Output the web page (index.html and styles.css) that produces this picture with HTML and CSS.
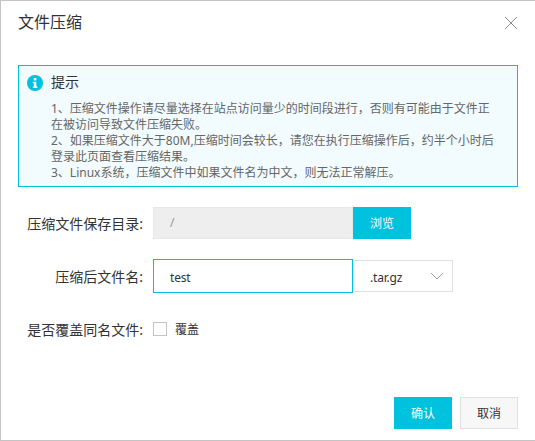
FILE: index.html
```html
<!DOCTYPE html>
<html lang="zh-CN">
<head>
<meta charset="utf-8">
<title>文件压缩</title>
<link rel="stylesheet" href="styles.css">
</head>
<body>
<div class="dialog">
  <header class="head">
    <h1 class="title">文件压缩</h1>
    <button class="close" aria-label="关闭">
      <svg width="14" height="14" viewBox="0 0 14 14"><path d="M1 1L13 13M13 1L1 13" stroke="#8a8f94" stroke-width="1" fill="none"/></svg>
    </button>
  </header>
  <section class="alert">
    <div class="alert-head">
      <svg class="info" width="16" height="16" viewBox="0 0 16 16"><circle cx="8" cy="8" r="8" fill="#00c1de"/><rect x="6.8" y="3" width="2.6" height="2.4" fill="#fff"/><path d="M5.8 6.8H9.3V11.6H10.4V13H5.8V11.6H6.9V8.2H5.8Z" fill="#fff"/></svg>
      <span class="alert-title">提示</span>
    </div>
    <div class="alert-body">
      <p>1、压缩文件操作请尽量选择在站点访问量少的时间段进行，否则有可能由于文件正在被访问导致文件压缩失败。</p>
      <p>2、如果压缩文件大于80M,压缩时间会较长，请您在执行压缩操作后，约半个小时后登录此页面查看压缩结果。</p>
      <p>3、Linux系统，压缩文件中如果文件名为中文，则无法正常解压。</p>
    </div>
  </section>
  <form class="form">
    <div class="row row-path">
      <label class="label">压缩文件保存目录:</label>
      <div class="input disabled">/</div>
      <button type="button" class="btn primary">浏览</button>
    </div>
    <div class="row row-name">
      <label class="label">压缩后文件名:</label>
      <div class="input focused">test</div>
      <div class="select"><span class="select-value">.tar.gz</span>
        <svg width="14" height="8" viewBox="0 0 14 8"><path d="M1 1L7 7L13 1" stroke="#9aa0a6" fill="none"/></svg>
      </div>
    </div>
    <div class="row row-check">
      <label class="label">是否覆盖同名文件:</label>
      <span class="check"></span>
      <span class="check-text">覆盖</span>
    </div>
  </form>
  <footer class="foot">
    <button type="button" class="btn primary">确认</button>
    <button type="button" class="btn plain">取消</button>
  </footer>
</div>
</body>
</html>
```
FILE: styles.css
```css
* { box-sizing: border-box; }
html, body { margin: 0; padding: 0; }
body {
  width: 535px;
  height: 441px;
  overflow: hidden;
  font-family: "Noto Sans", "Noto Sans CJK SC", sans-serif;
  font-size: 12px;
  color: #333;
  background: #fff;
}
.dialog {
  width: 535px;
  height: 441px;
  border: 1px solid #c4c4c4;
  border-right-width: 0;
  background: #fff;
  display: flex;
  flex-direction: column;
  padding: 0 17px 0 17px;
}
.head {
  height: 64px;
  display: flex;
  justify-content: space-between;
  padding-top: 10px;
}
.title {
  margin: 0;
  font-size: 16px;
  font-weight: 400;
  line-height: 22px;
  color: #333;
}
.close {
  width: 14px;
  height: 14px;
  padding: 0;
  margin: 5px 0 0 0;
  border: 0;
  background: none;
  display: block;
}
.close svg { display: block; }
.alert {
  width: 500px;
  height: 122px;
  border: 1px solid #00c1de;
  background: #f2fbfe;
  padding: 6px 20px 0 8px;
}
.alert-head {
  display: flex;
  align-items: center;
  gap: 8px;
  height: 22px;
}
.info { display: block; flex: none; }
.alert-title { font-size: 14px; line-height: 18px; margin-top: -2px; color: #333; }
.alert-body {
  margin-top: 7px;
  padding-left: 24px;
  line-height: 16px;
  color: #666;
}
.alert-body p { margin: 0; }
.form { padding-top: 20px; }
.row { display: flex; align-items: center; }
.label {
  width: 125px;
  margin-right: 10px;
  text-align: right;
  color: #333;
  font-size: 14px;
  flex: none;
  white-space: nowrap;
}
.input {
  width: 200px;
  padding-left: 16px;
  font-size: 12px;
}
.input.disabled {
  height: 32px;
  line-height: 30px;
  background: #eee;
  border: 1px solid #e8e8e8;
  color: #999;
}
.input.focused {
  height: 34px;
  line-height: 32px;
  padding-top: 2px;
  letter-spacing: -0.2px;
  border: 1px solid #00c1de;
  color: #333;
}
.btn {
  width: 58px;
  height: 32px;
  padding: 0;
  border: 0;
  font: inherit;
  display: block;
}
.primary { background: #00c1de; color: #fff; }
.plain { background: #f7f7f7; border: 1px solid #e1e1e1; color: #333; }
.row-path { height: 32px; }
.row-name { height: 34px; margin-top: 20px; }
.select {
  width: 100px;
  height: 32px;
  border: 1px solid #e1e1e1;
  display: flex;
  align-items: center;
  justify-content: space-between;
  padding: 0 14px 0 16px;
  color: #333;
}
.select-value { display: block; margin-top: 2px; letter-spacing: -0.2px; }
.select svg { display: block; margin-right: -6px; }
.row-check { height: 14px; margin-top: 29px; }
.check {
  width: 14px;
  height: 14px;
  border: 1px solid #c4c4c4;
  background: #fff;
  flex: none;
}
.check-text { margin-left: 8px; color: #333; }
.foot {
  margin-top: auto;
  padding-bottom: 11px;
  display: flex;
  justify-content: flex-end;
  gap: 8px;
}
```
